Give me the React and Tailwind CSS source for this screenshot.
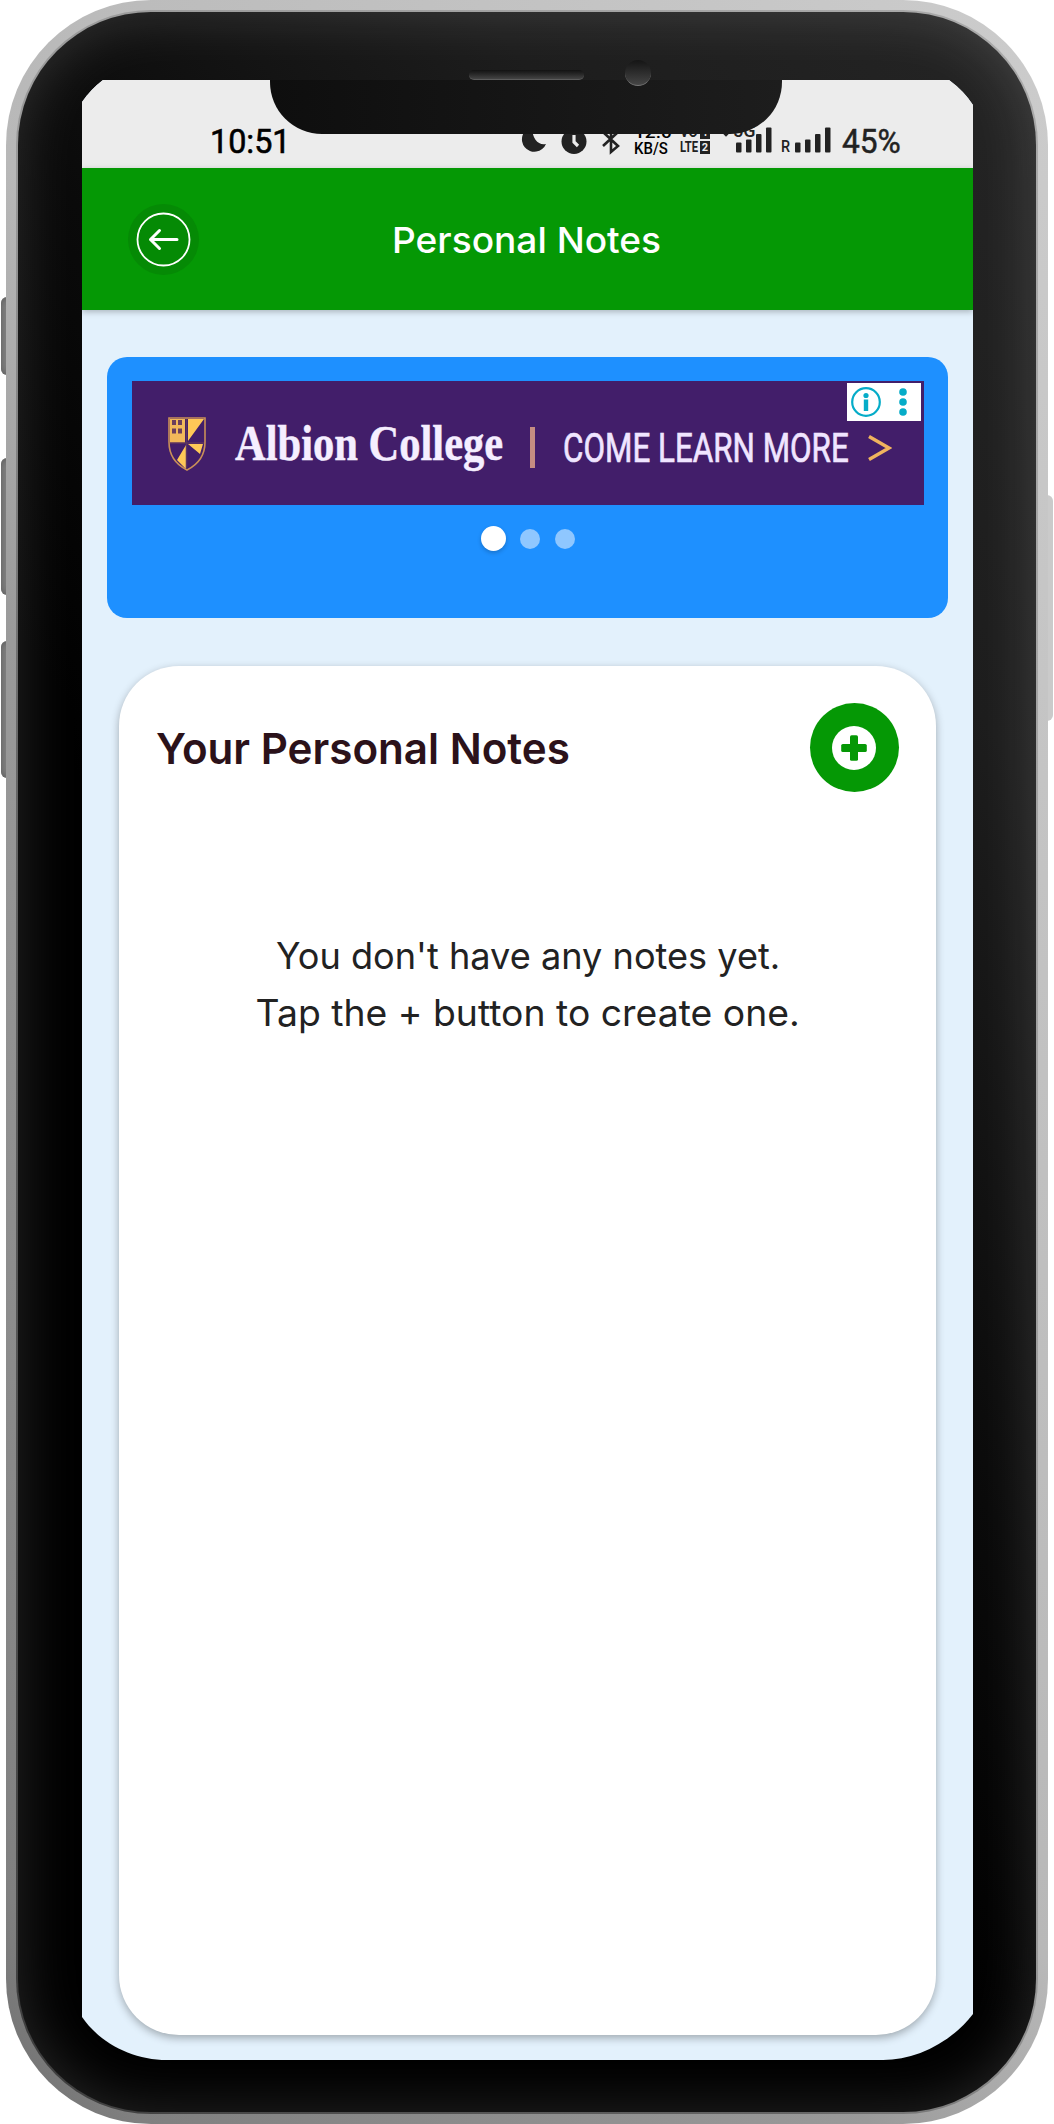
function SideButton({ className }) {
  return <div className={`absolute ${className}`} />;
}

function Shield() {
  return (
    <svg viewBox="0 0 38 54" className="block h-[54px] w-[38px]">
      <path d="M1 1h36v24c0 14-8 23-18 28C9 48 1 39 1 25Z" fill="#421e6a" stroke="#c98f58" strokeWidth="1.600" />
      <path d="M2 2h15v24H2z" fill="#f2b95a" />
      <path d="M4 5.500h11M4 14h11" stroke="#6b3f5c" strokeWidth="5" strokeDasharray="4 2" />
      <path d="M20 2h16L20 24zM18 28v24L9 43zM20 27h15l-3 10z" fill="#ffc857" />
      <path d="M3 28h14L8 42C5 38 3 33 3 28zM19 29v22l9-7z" fill="#421e6a" />
      <path d="M18.500 2v50M2 26h34" stroke="#5d3560" strokeWidth="1.500" />
    </svg>
  );
}

function Signal() {
  return (
    <svg viewBox="0 0 36 26" className="block h-[26px] w-9" fill="#222">
      <rect x="0" y="15.500" width="5.500" height="10" rx="1" />
      <rect x="10" y="12.500" width="5.500" height="13" rx="1" />
      <rect x="20" y="7" width="5.500" height="18.500" rx="1" />
      <rect x="30" y="0.500" width="5.500" height="25" rx="1" />
    </svg>
  );
}

function StatusBar() {
  return (
    <div className="flex h-22 shrink-0 items-start bg-[#ececec] pt-[38px] font-[Roboto,sans-serif] text-[#222]">
      <div className="ml-[128px] mt-[5px] w-[311px] text-[33px] leading-[38px] text-black">
        <span className="inline-block origin-left scale-x-[0.98] [-webkit-text-stroke:0.6px_black]">10:51</span>
      </div>
      <svg viewBox="0 0 26 28" className="mt-[7px] block h-7 w-[26px]" fill="#222">
        <path d="M11 2A12.500 12.500 0 1 0 25 19C18 21 11 14 11 2Z" />
      </svg>
      <svg viewBox="0 0 26 26" className="mt-[11px] ml-[14px] block size-[26px]">
        <circle cx="13" cy="12.500" r="12.500" fill="#222" />
        <path d="M13 6v7l4 4" fill="none" stroke="#ececec" strokeWidth="3.200" />
      </svg>
      <svg viewBox="0 0 18 32" className="mt-[6px] ml-[15px] block h-8 w-[18px]" fill="none" stroke="#222" strokeWidth="2.600">
        <path d="M1 8l15 14-7 6V3l7 5L1 22" />
      </svg>
      <div className="ml-[14px] w-[46px] text-[17px] leading-[14px] font-medium whitespace-nowrap text-black">
        <div className="mt-[7px] w-0 origin-left scale-x-[1.12]">12.0</div>
        <div className="mt-[2px] w-0 origin-left scale-x-[0.88]">KB/S</div>
      </div>
      <div className="w-[34px] text-[15px] leading-[13px] font-bold whitespace-nowrap">
        <div className="mt-[8px] flex items-center gap-px">
          <span className="w-[19px]"><span className="inline-block origin-left scale-x-[0.88]">VO</span></span>
          <span className="h-[13px] w-2.5 bg-[#222] text-center text-[10px] leading-[13px] text-[#ececec]">1</span>
        </div>
        <div className="mt-[2px] flex items-center gap-px">
          <span className="w-[19px]"><span className="inline-block origin-left scale-x-[0.75]">LTE</span></span>
          <span className="h-[13px] w-2.5 bg-[#222] text-center text-[11px] leading-[13px] text-[#ececec]">2</span>
        </div>
      </div>
      <div className="relative mt-[9px] ml-[22px]">
        <Signal />
        <span className="absolute -top-[3px] -left-[3px] text-[18px] leading-[14px] font-medium">5G</span>
        <span className="absolute top-0 -left-[14px] size-[8px] rotate-45 bg-[#222]" />
      </div>
      <span className="mt-[20px] ml-[9px] w-[14px] text-[16px] leading-[18px] font-medium">
        <span className="inline-block origin-left scale-x-[0.9]">R</span>
      </span>
      <div className="mt-[9px]"><Signal /></div>
      <div className="mt-[5px] ml-[11px] text-[33px] leading-[38px] whitespace-nowrap">
        <span className="inline-block origin-left scale-x-[0.96] [-webkit-text-stroke:0.5px_#222]">45%</span>
      </div>
    </div>
  );
}

function Header() {
  return (
    <header className="relative z-10 flex h-[142px] shrink-0 items-center bg-[#059805] pl-[46px] shadow-[0_2px_6px_rgba(0,0,0,0.25)]">
      <button aria-label="Back" className="block size-[71px] rounded-full bg-[#058a05]">
        <svg viewBox="0 0 71 71" className="block size-[71px]" fill="none" stroke="#fff" strokeLinecap="round" strokeLinejoin="round">
          <circle cx="35.500" cy="35.500" r="26" strokeWidth="1.800" />
          <path d="M49 35.500H22.500M31.500 26.500l-9 9 9 9" strokeWidth="3" />
        </svg>
      </button>
      <h1 className="ml-[193px] mt-[2px] w-[270px] font-[Inter,sans-serif] text-[36px] leading-[48px] font-medium whitespace-nowrap text-white">
        <span className="inline-block origin-left scale-x-[1.03]">Personal Notes</span>
      </h1>
    </header>
  );
}

function AdCard() {
  return (
    <section className="mx-[25px] mt-[47px] flex h-[261px] shrink-0 flex-col items-center rounded-[20px] bg-[#1e90ff] pt-6">
      <div className="relative flex h-[124px] w-[792px] items-start bg-[#421e6a] whitespace-nowrap">
        <div className="mt-[36px] ml-[36px]"><Shield /></div>
        <div className="mt-[32px] ml-[29px] w-[285px] font-['Liberation_Serif',serif] text-[51px] leading-[60px] font-bold text-[#f5eeff]">
          <span className="inline-block origin-left scale-x-[0.834] [-webkit-text-stroke:0.5px_#f5eeff]">Albion College</span>
        </div>
        <div className="mt-[46px] ml-[10px] h-[41px] w-[5px] bg-[#c58d82]" />
        <div className="mt-[43px] ml-[28px] w-[292px] font-[Roboto,sans-serif] text-[41px] leading-[48px] text-[#f0e5ff]">
          <span className="inline-block origin-left scale-x-[0.765] [-webkit-text-stroke:0.700px_#f0e5ff]">COME LEARN MORE</span>
        </div>
        <svg viewBox="0 0 24 26" className="mt-[54px] ml-[13px] block h-[26px] w-6" fill="none" stroke="#f0b45e" strokeWidth="3.500">
          <path d="M1 1.500L21 13 1 24.500" />
        </svg>
        <div className="absolute top-0.5 right-[3px] flex h-[38px] w-[74px] items-center bg-white pl-1">
          <svg viewBox="0 0 66 30" className="block h-[30px] w-[66px]" fill="#05acc8">
            <circle cx="15" cy="15" r="13.800" fill="none" stroke="#05acc8" strokeWidth="2.200" />
            <circle cx="15" cy="8.500" r="2.600" />
            <rect x="12.800" y="12.500" width="4.400" height="11.500" />
            <circle cx="52" cy="5" r="3.800" />
            <circle cx="52" cy="15" r="3.800" />
            <circle cx="52" cy="25" r="3.800" />
          </svg>
        </div>
      </div>
      <div className="mt-[21px] flex items-center gap-[14.500px]">
        <span className="size-[25px] rounded-full bg-white shadow-[0_2px_4px_rgba(0,0,0,0.2)]" />
        <span className="size-5 rounded-full bg-[#8fc7ff]" />
        <span className="size-5 rounded-full bg-[#8fc7ff]" />
      </div>
    </section>
  );
}

function NotesCard() {
  return (
    <section className="mx-[37px] mt-[48px] flex h-[1369px] shrink-0 flex-col rounded-[60px] bg-white font-[Inter,sans-serif] shadow-[0_3px_9px_rgba(0,0,0,0.3)]">
      <div className="flex items-start justify-between pt-[37px] pr-[37.500px] pl-[37px]">
        <h2 className="mt-[19px] w-[440px] text-[43px] leading-[52px] font-semibold whitespace-nowrap text-[#2b121a]">
          <span className="inline-block origin-left scale-x-[0.98]">Your Personal Notes</span>
        </h2>
        <button aria-label="Add note" className="flex size-[89px] items-center justify-center rounded-full bg-[#059805]">
          <svg viewBox="0 0 44 44" className="block size-11">
            <circle cx="22" cy="22" r="22" fill="#fff" />
            <rect x="9.200" y="18" width="25.600" height="8" rx="1.600" fill="#059805" />
            <rect x="18" y="9.200" width="8" height="25.600" rx="1.600" fill="#059805" />
          </svg>
        </button>
      </div>
      <p className="mt-[135px] flex flex-col items-center pl-px text-[37px] leading-[57px] whitespace-nowrap text-[#222]">
        <span className="scale-x-[0.977]">You don't have any notes yet.</span>
        <span className="scale-x-[1.009]">Tap the + button to create one.</span>
      </p>
    </section>
  );
}

export default function App() {
  return (
    <div className="relative h-[2124px] w-[1054px] overflow-hidden bg-white">
      <SideButton className="top-[297px] left-px h-[78px] w-3 rounded-l-[6px] bg-[#858585] shadow-[inset_0_0_8px_#555]" />
      <SideButton className="top-[458px] left-px h-[137px] w-3 rounded-l-[6px] bg-[#858585] shadow-[inset_0_0_8px_#555]" />
      <SideButton className="top-[641px] left-px h-[137px] w-3 rounded-l-[6px] bg-[#858585] shadow-[inset_0_0_8px_#555]" />
      <SideButton className="top-[495px] right-px h-[226px] w-3 rounded-r-[6px] bg-[#cacaca]" />

      <div className="relative ml-1.5 h-[2124px] w-[1042px] rounded-[145px] bg-[linear-gradient(60deg,#707070_0%,#808080_6%,#9a9a9a_38%,#b8b8b8_50%,#cccccc_100%)] p-2.5">
        <div className="h-[2104px] w-[1022px] rounded-[135px] bg-[linear-gradient(60deg,#3c3c3c,#666_35%,#999_50%,#aaa)] p-0.5">
          <div className="h-[2100px] w-[1018px] rounded-[133px] bg-[linear-gradient(235deg,#252525_0%,#1d1d1d_22%,#0a0a0a_44%,#000_60%)] pt-[68px] pl-[64px] shadow-[inset_0_0_60px_rgba(255,255,255,0.16)]">
            <main className="flex h-[1980px] w-[891px] flex-col bg-[#e3f1fc] [clip-path:path('M0_22Q9_9_21_0H867Q882_11_891_25V1934C868_1964_832_1980_801_1980H85C50_1980_18_1963_0_1937Z')]">
              <StatusBar />
              <Header />
              <AdCard />
              <NotesCard />
            </main>
          </div>
        </div>
      </div>

      <div className="absolute top-[70px] left-[270px] h-16 w-[512px] rounded-b-[52px] bg-[linear-gradient(90deg,#0e0e0e,#1d1d1d)] [clip-path:inset(10px_0_0_0)]" />
      <div className="absolute top-[70px] left-[469px] h-2.5 w-[115px] rounded-full border-b border-[#5c5c5c] bg-linear-to-b from-[#121212] to-[#444]" />
      <div className="absolute top-[60px] left-[625px] size-[26px] rounded-full border-b border-[#777] bg-linear-to-b from-[#151515] to-[#464646]" />
    </div>
  );
}
